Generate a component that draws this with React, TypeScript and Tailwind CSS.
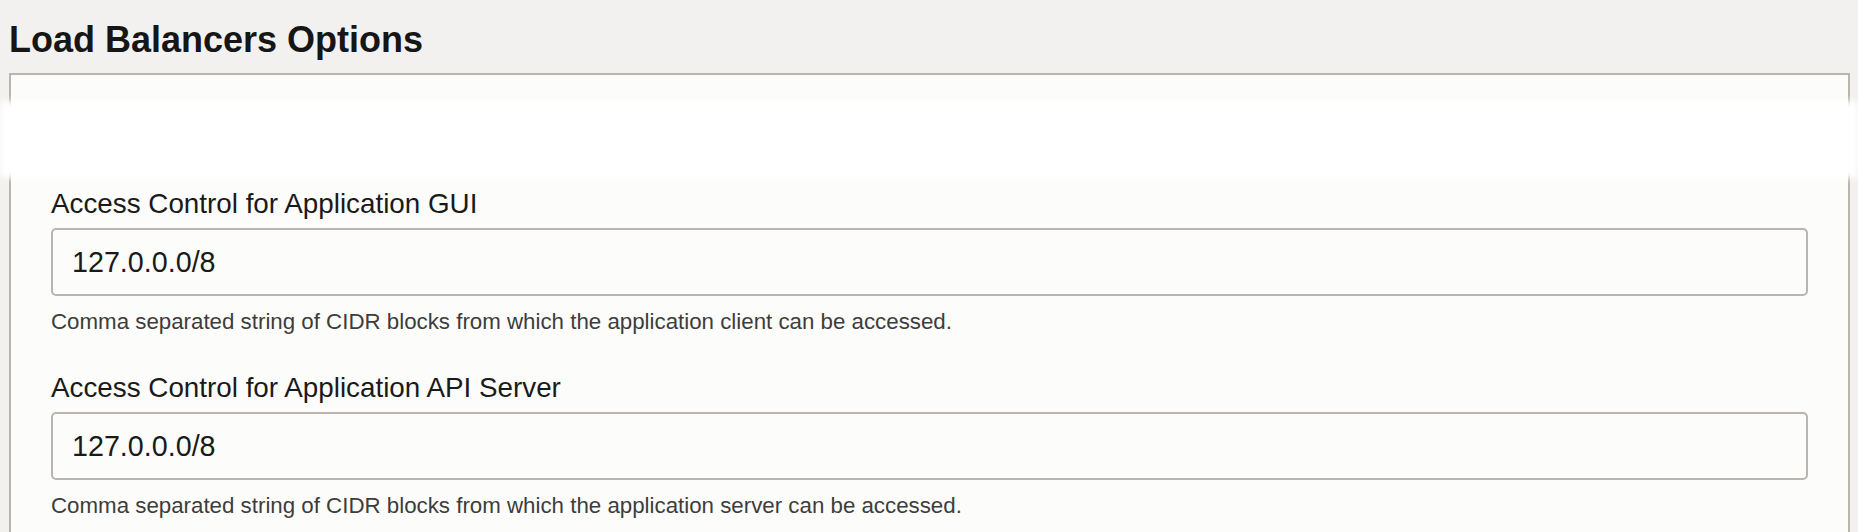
import React from 'react';

const fields = [
  {
    label: 'Access Control for Application GUI',
    value: '127.0.0.0/8',
    help: 'Comma separated string of CIDR blocks from which the application client can be accessed.',
  },
  {
    label: 'Access Control for Application API Server',
    value: '127.0.0.0/8',
    help: 'Comma separated string of CIDR blocks from which the application server can be accessed.',
  },
];

function Field({ label, value, help }: { label: string; value: string; help: string }) {
  return (
    <div className="flex flex-col">
      <label className="text-[27.8px] leading-[32px] text-[#1a1a1a]">{label}</label>
      <input
        readOnly
        value={value}
        className="mt-2 h-[68px] w-full rounded-[5px] border-2 border-[#bab6ae] bg-[#fcfcfa] pl-[19px] text-[28.7px] text-[#1a1a1a] outline-none"
      />
      <p className="mt-3 text-[22.3px] leading-[28px] text-[#3d3d3d]">{help}</p>
    </div>
  );
}

export default function App() {
  return (
    <div className="relative h-[532px] overflow-hidden bg-[#f2f1ef] pl-[9px] pr-[8px] font-['Liberation_Sans',Arial,sans-serif]">
      <h1 className="pt-5 text-[36px] font-bold leading-[40px] text-[#161616]">Load Balancers Options</h1>

      <div className="mt-[13px] border-2 border-[#bab6ae] bg-[#fcfcfa] px-10 pb-10 pt-[113px]">
        <div className="flex flex-col gap-9">
          {fields.map((f) => (
            <Field key={f.label} {...f} />
          ))}
        </div>
      </div>

      {/* redaction band over the panel header */}
      <div className="absolute left-0 right-0 top-[101px] h-[77px] bg-white blur-[3px]" />
    </div>
  );
}
